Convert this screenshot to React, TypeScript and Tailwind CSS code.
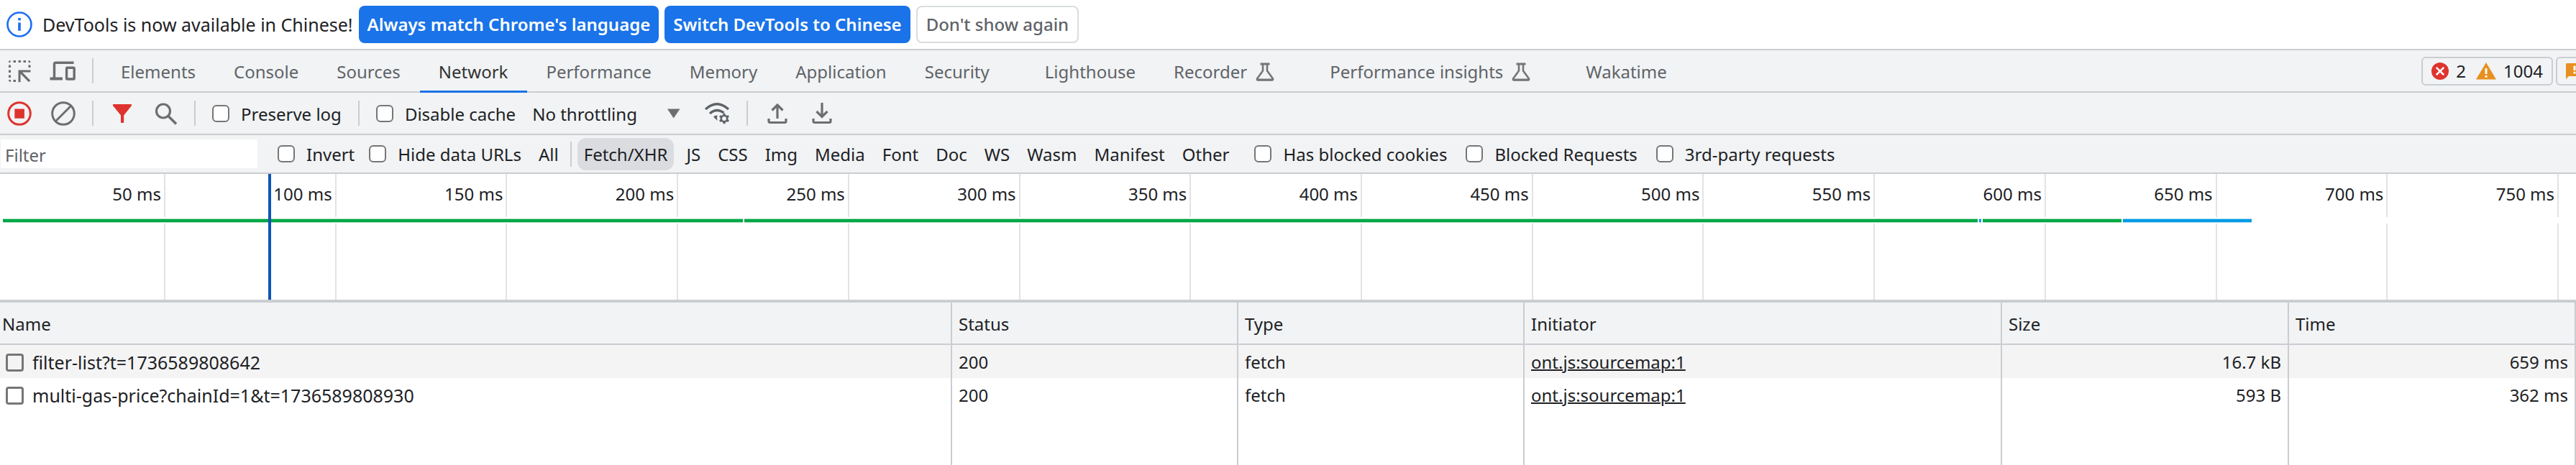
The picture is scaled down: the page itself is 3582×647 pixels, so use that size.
import React, { useState } from 'react'

interface ITab {
  name: string
  experimental?: boolean
  extraSpace?: boolean
}

interface IRequest {
  name: string
  status: number
  type: string
  initiator: string
  size: string
  time: string
}

interface ISegment {
  start: number
  end: number
  kind: 'waiting' | 'download'
}

const tabs: ITab[] = [
  { name: 'Elements' },
  { name: 'Console' },
  { name: 'Sources' },
  { name: 'Network' },
  { name: 'Performance' },
  { name: 'Memory' },
  { name: 'Application' },
  { name: 'Security', extraSpace: true },
  { name: 'Lighthouse' },
  { name: 'Recorder', experimental: true, extraSpace: true },
  { name: 'Performance insights', experimental: true, extraSpace: true },
  { name: 'Wakatime' }
]

const resourceTypes = [
  'Fetch/XHR',
  'JS',
  'CSS',
  'Img',
  'Media',
  'Font',
  'Doc',
  'WS',
  'Wasm',
  'Manifest',
  'Other'
]

const requests: IRequest[] = [
  {
    name: 'filter-list?t=1736589808642',
    status: 200,
    type: 'fetch',
    initiator: 'ont.js:sourcemap:1',
    size: '16.7 kB',
    time: '659 ms'
  },
  {
    name: 'multi-gas-price?chainId=1&t=1736589808930',
    status: 200,
    type: 'fetch',
    initiator: 'ont.js:sourcemap:1',
    size: '593 B',
    time: '362 ms'
  }
]

const ticks = Array.from({ length: 15 }, (_, i) => (i + 1) * 50)

// Share of the overview width, in percent
const segments: ISegment[] = [
  { start: 0.1, end: 28.84, kind: 'waiting' },
  { start: 28.9, end: 76.77, kind: 'waiting' },
  { start: 76.83, end: 76.91, kind: 'download' },
  { start: 76.97, end: 82.36, kind: 'waiting' },
  { start: 82.42, end: 87.41, kind: 'download' }
]

const InfoIcon = () => (
  <svg width="36" height="36" viewBox="0 0 36 36" fill="none" className="shrink-0">
    <circle cx="18" cy="18" r="16.5" stroke="#1a6ff2" strokeWidth="2.6" />
    <rect x="16.2" y="9" width="3.6" height="3.4" fill="#1a6ff2" />
    <rect x="16.2" y="15.4" width="3.6" height="11.4" fill="#1a6ff2" />
  </svg>
)

const InspectIcon = () => (
  <svg width="32" height="32" viewBox="0 0 32 32" fill="#6e6e6e" className="shrink-0">
    <path d="M1 3.5A2.5 2.5 0 0 1 3.5 1V4H1zM7.5 1h3.5v3H7.5zM14.5 1h3.5v3h-3.5zM21.5 1h3.5v3h-3.5zM28.5 1A3 3 0 0 1 31.5 4h-3zM1 7.5h3V11H1zM28.5 7.5h3V11h-3zM1 14.5h3V18H1zM1 21.5h3V25H1zM1 28h3v3A3 3 0 0 1 1 28zM7.5 28H11v3H7.5z" />
    <path d="M14.5 14.5H31.5V17.6H20L31.3 28.9L29 31.2L17.6 19.8V31.2H14.5z" />
  </svg>
)

const DeviceIcon = () => (
  <svg width="36" height="32" viewBox="0 0 36 32" fill="none" stroke="#6e6e6e" strokeWidth="3.4" className="shrink-0">
    <path d="M33.5 4.2H8.5Q6.5 4.2 6.5 6.2V26" />
    <path d="M0.5 26.5H18" strokeWidth="4" />
    <rect x="23.6" y="11.2" width="10.6" height="15.8" rx="1" />
  </svg>
)

const FlaskIcon = () => (
  <svg width="26" height="26" viewBox="0 0 26 26" fill="none" stroke="#757575" strokeWidth="2.6" strokeLinejoin="round" className="shrink-0">
    <path d="M6.5 2h13" strokeWidth="3" />
    <path d="M10 2.5V11.5L2 22.5Q1.6 24.5 3.2 24.5H22.8Q24.4 24.5 24 22.5L16 11.5V2.5" />
    <path d="M3 23.8H23" />
  </svg>
)

const RecordIcon = () => (
  <svg width="34" height="34" viewBox="0 0 34 34" fill="none">
    <circle cx="17" cy="17" r="15.3" stroke="#de342e" strokeWidth="3" />
    <rect x="10.3" y="10.5" width="13.6" height="13.2" fill="#de342e" />
  </svg>
)

const ClearIcon = () => (
  <svg width="34" height="34" viewBox="0 0 34 34" fill="none" stroke="#6e6e6e" strokeWidth="3">
    <circle cx="17" cy="17" r="15.3" />
    <path d="M27.5 6.5L6.5 27.5" />
  </svg>
)

const FilterIcon = () => (
  <svg width="26" height="28" viewBox="0 0 26 28" fill="#de342e">
    <path d="M0 1.5Q0 1 0.8 1H25.2Q26 1 26 1.5V3L15.2 16.5V26Q15.2 27 14.2 27H12Q11 27 11 26V16.5L0 3z" />
  </svg>
)

const SearchIcon = () => (
  <svg width="32" height="32" viewBox="0 0 32 32" fill="none" stroke="#6e6e6e" strokeWidth="3.2">
    <circle cx="12" cy="12.5" r="9.5" />
    <path d="M18.5 19L30 30.5" strokeWidth="3.6" />
  </svg>
)

const NetworkConditionsIcon = () => (
  <svg width="36" height="32" viewBox="0 0 36 32" fill="none" stroke="#5f6368">
    <path d="M2 10Q18 -4.5 34 10" strokeWidth="3.4" />
    <path d="M8 16Q17.5 7.5 27.5 15" strokeWidth="3.4" />
    <path d="M13 20.5Q16 18 18.5 18.8Q17.5 22 18.5 26z" fill="#5f6368" stroke="none" />
    <circle cx="28" cy="23" r="4.2" strokeWidth="2.6" />
    <path d="M28 15.8V18.5M28 27.5V30.2M21.8 19.4L24 20.7M32 25.3L34.2 26.6M21.8 26.6L24 25.3M32 20.7L34.2 19.4" strokeWidth="3" />
  </svg>
)

const UploadIcon = () => (
  <svg width="28" height="30" viewBox="0 0 28 30" fill="none" stroke="#6e6e6e" strokeWidth="3.2">
    <path d="M14 22V3M6.5 10.5L14 3L21.5 10.5" />
    <path d="M2 22V25.5Q2 27.5 4 27.5H24Q26 27.5 26 25.5V22" />
  </svg>
)

const DownloadIcon = () => (
  <svg width="28" height="30" viewBox="0 0 28 30" fill="none" stroke="#6e6e6e" strokeWidth="3.2">
    <path d="M14 0V19.5M6.5 12L14 19.5L21.5 12" />
    <path d="M2 22V25.5Q2 27.5 4 27.5H24Q26 27.5 26 25.5V22" />
  </svg>
)

const ErrorIcon = () => (
  <svg width="24" height="24" viewBox="0 0 24 24" fill="none" className="shrink-0">
    <circle cx="12" cy="12" r="12" fill="#de342e" />
    <path d="M6.8 6.8L17.2 17.2M17.2 6.8L6.8 17.2" stroke="#fff" strokeWidth="2.6" />
  </svg>
)

const WarningIcon = () => (
  <svg width="28" height="24" viewBox="0 0 28 24" className="shrink-0">
    <path d="M14 0L28 23.5H0z" fill="#e8901f" />
    <path d="M12.5 8h3v8h-3zM12.5 18h3v2.8h-3z" fill="#fff" />
  </svg>
)

const IssueIcon = () => (
  <svg width="26" height="22" viewBox="0 0 26 22" className="shrink-0">
    <path d="M1.5 0H24.5Q26 0 26 1.5V16.5Q26 18 24.5 18H4L0 22V1.5Q0 0 1.5 0z" fill="#e8901f" />
    <path d="M10.5 3.5h3v6.5h-3zM10.5 11.8h3v2.7h-3z" fill="#fff" />
  </svg>
)

const Divider = () => <span className="h-[35px] w-0.5 shrink-0 bg-[#cacdd1]" />

const Check = ({ label }: { label: string }) => (
  <label className="flex items-center gap-4">
    <input
      type="checkbox"
      className="size-6 shrink-0 appearance-none rounded-md border-2 border-[#767676] bg-white checked:bg-[#1a73e8]"
    />
    <span className="pt-0.5">{label}</span>
  </label>
)

const App: React.FC = () => {
  const [activeTab, setActiveTab] = useState('Network')
  const [activeType, setActiveType] = useState('Fetch/XHR')
  const [filter, setFilter] = useState('')

  return (
    <div className="flex h-screen flex-col overflow-hidden bg-white font-['Noto_Sans','Open_Sans',sans-serif] text-[24px] leading-8 whitespace-nowrap text-[#202124]">
      {/* Language infobar */}
      <div className="flex h-[70px] shrink-0 items-center gap-2 border-b-2 border-[#cacdd1] pl-[9px]">
        <InfoIcon />
        <span className="ml-1.5 text-[25px]">DevTools is now available in Chinese!</span>
        <button className="h-[52px] rounded-lg bg-[#1a73e8] px-3 font-semibold text-white">
          Always match Chrome&apos;s language
        </button>
        <button className="h-[52px] rounded-lg bg-[#1a73e8] px-3 font-semibold text-white">
          Switch DevTools to Chinese
        </button>
        <button className="h-[52px] rounded-lg border-2 border-[#dadce0] px-3 font-medium text-[#5f6368]">
          Don&apos;t show again
        </button>
      </div>

      {/* Panel tabs */}
      <div className="flex h-[59px] shrink-0 items-stretch border-b-2 border-[#cacdd1] bg-[#f1f3f4]">
        <div className="flex items-center gap-[26px] pl-[11px]">
          <button aria-label="Select an element">
            <InspectIcon />
          </button>
          <button aria-label="Toggle device toolbar">
            <DeviceIcon />
          </button>
        </div>
        <div className="mr-3 ml-[23px] flex items-center">
          <Divider />
        </div>
        <nav className="flex items-stretch">
          {tabs.map((tab) => (
            <button
              key={tab.name}
              onClick={() => {
                setActiveTab(tab.name)
              }}
              className={`-mb-0.5 flex items-center gap-3 border-b-[3px] pt-1 pr-[27px] pl-[26px] ${
                tab.extraSpace ? 'mr-6' : ''
              } ${
                activeTab === tab.name
                  ? 'border-[#1a73e8] text-[#333333]'
                  : 'border-transparent text-[#5f6368]'
              }`}
            >
              {tab.name}
              {tab.experimental && <FlaskIcon />}
            </button>
          ))}
        </nav>
        <div className="-mr-[38px] ml-auto flex items-center gap-1">
          <button className="flex h-10 items-center gap-2.5 rounded-md border-2 border-[#cacdd1] px-3">
            <ErrorIcon />
            <span className="mr-1">2</span>
            <WarningIcon />
            <span>1004</span>
          </button>
          <button
            aria-label="Issues"
            className="flex h-10 items-center rounded-md border-2 border-[#cacdd1] px-3 pr-6"
          >
            <IssueIcon />
          </button>
        </div>
      </div>

      {/* Network toolbar */}
      <div className="flex h-[59px] shrink-0 items-center border-b-2 border-[#cacdd1] bg-[#f1f3f4] pl-2.5">
        <div className="flex items-center gap-[23px]">
          <div className="flex gap-[27px]">
            <button aria-label="Stop recording">
              <RecordIcon />
            </button>
            <button aria-label="Clear">
              <ClearIcon />
            </button>
          </div>
          <Divider />
          <div className="ml-1 flex items-center gap-8">
            <button aria-label="Filter">
              <FilterIcon />
            </button>
            <button aria-label="Search">
              <SearchIcon />
            </button>
          </div>
          <Divider />
          <Check label="Preserve log" />
          <Divider />
          <Check label="Disable cache" />
          <div className="flex items-center">
            <select aria-label="Throttling" className="w-[188px] appearance-none bg-transparent pt-0.5">
              <option>No throttling</option>
              <option>Fast 3G</option>
              <option>Slow 3G</option>
              <option>Offline</option>
            </select>
            <svg width="18" height="14" viewBox="0 0 18 14" fill="#6e6e6e">
              <path d="M0 0.5H17.5L8.7 13.5z" />
            </svg>
          </div>
          <div className="ml-2.5 flex items-center">
            <button aria-label="Network conditions">
              <NetworkConditionsIcon />
            </button>
          </div>
          <Divider />
          <div className="ml-1 flex items-center gap-[34px]">
            <button aria-label="Import HAR file">
              <UploadIcon />
            </button>
            <button aria-label="Export HAR file">
              <DownloadIcon />
            </button>
          </div>
        </div>
      </div>

      {/* Filter bar */}
      <div className="flex h-[54px] shrink-0 items-center border-b-2 border-[#cacdd1] bg-[#f1f3f4] pl-px">
        <input
          type="text"
          aria-label="Filter"
          placeholder="Filter"
          value={filter}
          onChange={(e) => {
            setFilter(e.target.value)
          }}
          className="mr-7 h-10 w-[357px] bg-white px-1.5 pt-0.5 outline-none placeholder:text-[#5f6368]"
        />
        <div className="flex items-center gap-5">
          <Check label="Invert" />
          <Check label="Hide data URLs" />
        </div>
        <button className="mr-3 ml-5 px-1 pt-0.5">All</button>
        <Divider />
        <div className="ml-2 flex items-center gap-2.5">
          {resourceTypes.map((type) => (
            <button
              key={type}
              onClick={() => {
                setActiveType(type)
              }}
              className={`h-[45px] rounded-xl pt-0.5 ${
                activeType === type ? 'bg-[#dadce0] px-[9px]' : 'px-[7px]'
              }`}
            >
              {type}
            </button>
          ))}
        </div>
        <div className="ml-7 flex items-center gap-[26px]">
          <Check label="Has blocked cookies" />
          <Check label="Blocked Requests" />
          <Check label="3rd-party requests" />
        </div>
      </div>

      {/* Timeline overview */}
      <div className="relative flex h-[179px] shrink-0 border-b-4 border-[#cacdd1] pr-6">
        {ticks.map((tick) => (
          <div
            key={tick}
            className="flex-1 border-r-2 border-[#e3e3e3] pt-3 pr-1 text-right first:w-[230px] first:flex-none"
          >
            {tick} ms
          </div>
        ))}
        <div className="absolute inset-x-0 top-[60px] h-[9px] bg-white">
          {segments.map((segment) => (
            <div
              key={segment.start}
              className={`absolute top-0.5 h-1.5 border-y ${
                segment.kind === 'waiting'
                  ? 'border-[#a9dfbe] bg-[#00a846]'
                  : 'border-[#a5dcf6] bg-[#039be5]'
              }`}
              style={{
                left: `${segment.start}%`,
                width: `${segment.end - segment.start}%`
              }}
            />
          ))}
        </div>
        <div className="absolute inset-y-0 left-[373px] w-1 bg-[#1155b3]" />
      </div>

      {/* Requests */}
      <div className="min-h-0 flex-1">
        <table className="h-full w-full table-fixed border-separate border-spacing-0 text-left">
          <thead>
            <tr className="h-[59px] bg-[#f1f3f4] *:border-r-2 *:border-b-2 *:border-[#cacdd1] *:px-[9px] *:pt-0.5 *:font-normal">
              <th className="pl-[3px]!">Name</th>
              <th className="w-[398px]">Status</th>
              <th className="w-[398px]">Type</th>
              <th className="w-[664px]">Initiator</th>
              <th className="w-[399px]">Size</th>
              <th className="w-[399px]">Time</th>
            </tr>
          </thead>
          <tbody>
            {requests.map((request) => (
              <tr
                key={request.name}
                className="h-[46px] *:border-r-2 *:border-[#cacdd1] *:px-[9px] *:pt-0.5 odd:bg-[#f4f4f4]"
              >
                <td className="pl-2!">
                  <label className="flex items-center gap-3 text-[25px]">
                    <input
                      type="checkbox"
                      className="size-[25px] shrink-0 appearance-none rounded-sm border-3 border-[#767676] checked:bg-[#1a73e8]"
                    />
                    {request.name}
                  </label>
                </td>
                <td>{request.status}</td>
                <td>{request.type}</td>
                <td>
                  <a href="#initiator" className="underline decoration-2">
                    {request.initiator}
                  </a>
                </td>
                <td className="text-right">{request.size}</td>
                <td className="text-right">{request.time}</td>
              </tr>
            ))}
            <tr className="*:border-r-2 *:border-[#cacdd1]">
              <td />
              <td />
              <td />
              <td />
              <td />
              <td />
            </tr>
          </tbody>
        </table>
      </div>
    </div>
  )
}

export default App
